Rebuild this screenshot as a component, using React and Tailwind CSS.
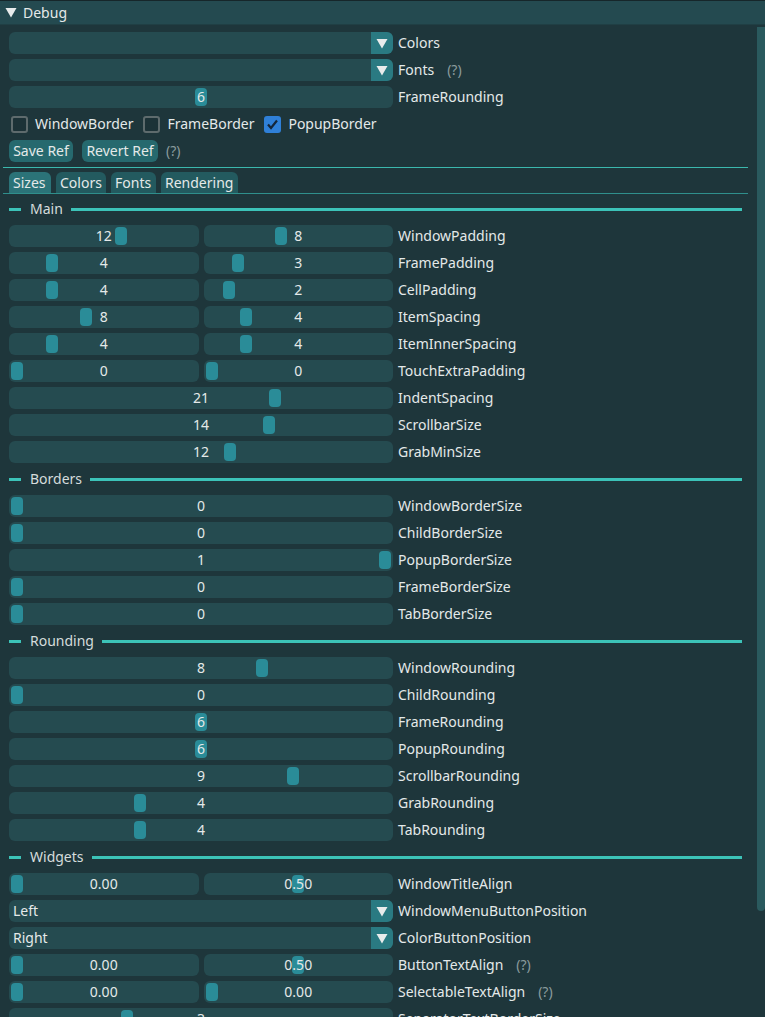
import React from "react";

const Grab = ({ t }) => (
  <div
    className="absolute top-[2px] h-[18px] w-[12px] rounded-[4px] bg-[#2a8c98]"
    style={{ left: `calc(2px + ${t} * (100% - 16px))` }}
  />
);

const Slider = ({ value, min = 0, max = 20, text }) => {
  const t = (value - min) / (max - min);
  return (
    <div className="relative h-[22px] flex-1 rounded-[6px] bg-[#254b50] flex items-center justify-center">
      <Grab t={t} />
      <span className="relative">{text ?? value}</span>
    </div>
  );
};

const Combo = ({ text = "" }) => (
  <div className="h-[22px] w-full rounded-[6px] bg-[#254b50] flex items-center">
    <span className="flex-1 pl-[4px]">{text}</span>
    <div className="w-[22px] h-[22px] rounded-r-[6px] bg-[#2a7a82] flex items-center justify-center">
      <svg width="12" height="11" viewBox="0 0 12 11">
        <polygon points="0.5,1 11.5,1 6,10.5" fill="#e8ecec" />
      </svg>
    </div>
  </div>
);

const Help = () => <span className="ml-[8px] text-[#8a9b9d]">(?)</span>;

const Row = ({ label, help, children }) => (
  <div className="flex shrink-0 items-center h-[22px] gap-[5px]">
    <div className="w-[384px] flex gap-[5px]">{children}</div>
    <span>{label}</span>
    {help && <Help />}
  </div>
);

const Section = ({ title }) => (
  <div className="flex shrink-0 items-center h-[22px]">
    <div className="w-[12px] h-[3px] bg-[#3cc3b8]" />
    <span className="ml-[9px] text-[#d5dcdc]">{title}</span>
    <div className="flex-1 ml-[8px] mr-[6px] h-[3px] bg-[#3cc3b8]" />
  </div>
);

const Checkbox = ({ label, checked }) => (
  <div className="flex items-center">
    <div
      className={`w-[17px] h-[17px] rounded-[3px] flex items-center justify-center ${
        checked ? "bg-[#2f80d8]" : "border-2 border-[#5e6b6d] bg-[#1c3237]"
      }`}
    >
      {checked && (
        <svg width="13" height="13" viewBox="0 0 13 13">
          <polyline points="2,6.5 5,10 11,2.5" fill="none" stroke="#14263a" strokeWidth="2.2" />
        </svg>
      )}
    </div>
    <span className="ml-[7px]">{label}</span>
  </div>
);

const Tab = ({ label, active, w }) => (
  <div
    className={`h-[21px] rounded-t-[6px] pl-[4px] leading-[21px] ${w} ${
      active ? "bg-[#2b7378]" : "bg-[#235a5f]"
    }`}
  >
    {label}
  </div>
);

const pairs = [
  ["WindowPadding", [12, 8]],
  ["FramePadding", [4, 3]],
  ["CellPadding", [4, 2]],
  ["ItemSpacing", [8, 4]],
  ["ItemInnerSpacing", [4, 4]],
];

const singles = [
  ["IndentSpacing", 21, 0, 30],
  ["ScrollbarSize", 14, 1, 20],
  ["GrabMinSize", 12, 1, 20],
];

const borders = [
  ["WindowBorderSize", 0],
  ["ChildBorderSize", 0],
  ["PopupBorderSize", 1],
  ["FrameBorderSize", 0],
  ["TabBorderSize", 0],
];

const rounding = [
  ["WindowRounding", 8],
  ["ChildRounding", 0],
  ["FrameRounding", 6],
  ["PopupRounding", 6],
  ["ScrollbarRounding", 9],
  ["GrabRounding", 4],
  ["TabRounding", 4],
];

export default function App() {
  return (
    <div className="w-[765px] h-[1017px] overflow-hidden bg-[#1e363b] text-[#e4e9e9] text-[14px] font-['Noto_Sans',sans-serif] flex flex-col">
      {/* Header */}
      <div className="h-[25px] shrink-0 border-t border-[#16262a] bg-[#244a50] flex items-center pl-[5px] border-b border-b-[#203f44]">
        <svg width="12" height="11" viewBox="0 0 12 11">
          <polygon points="0.5,1 11.5,1 6,10.5" fill="#e8ecec" />
        </svg>
        <span className="ml-[6px]">Debug</span>
      </div>

      <div className="flex flex-1 min-h-0">
        {/* Content */}
        <div className="flex-1 pl-[9px] pr-[9px] pt-[7px] flex flex-col gap-[5px] leading-[22px]">
          <Row label="Colors">
            <Combo />
          </Row>
          <Row label="Fonts" help>
            <Combo />
          </Row>
          <Row label="FrameRounding">
            <Slider value={6} max={12} />
          </Row>

          <div className="flex shrink-0 items-center h-[22px] pl-[2px]">
            <Checkbox label="WindowBorder" />
            <div className="ml-[10px]">
              <Checkbox label="FrameBorder" />
            </div>
            <div className="ml-[10px]">
              <Checkbox label="PopupBorder" checked />
            </div>
          </div>

          <div className="flex shrink-0 items-center h-[22px]">
            <div className="w-[64px] h-[22px] rounded-[6px] bg-[#26696e] text-center">Save Ref</div>
            <div className="ml-[9px] w-[76px] h-[22px] rounded-[6px] bg-[#26696e] text-center">Revert Ref</div>
            <Help />
          </div>

          <div className="h-px shrink-0 -ml-[6px] bg-[#3bb8ad]" />

          <div className="shrink-0 -mt-[1px] -mb-[1px]">
            <div className="flex gap-[5px]">
              <Tab label="Sizes" active w="w-[42px]" />
              <Tab label="Colors" w="w-[50px]" />
              <Tab label="Fonts" w="w-[45px]" />
              <Tab label="Rendering" w="w-[77px]" />
            </div>
            <div className="h-px -ml-[6px] bg-[#2f8f8c]" />
          </div>

          <Section title="Main" />
          {pairs.map(([label, [a, b]]) => (
            <Row key={label} label={label}>
              <Slider value={a} />
              <Slider value={b} />
            </Row>
          ))}
          <Row label="TouchExtraPadding">
            <Slider value={0} max={10} />
            <Slider value={0} max={10} />
          </Row>
          {singles.map(([label, v, min, max]) => (
            <Row key={label} label={label}>
              <Slider value={v} min={min} max={max} />
            </Row>
          ))}

          <Section title="Borders" />
          {borders.map(([label, v]) => (
            <Row key={label} label={label}>
              <Slider value={v} max={1} />
            </Row>
          ))}

          <Section title="Rounding" />
          {rounding.map(([label, v]) => (
            <Row key={label} label={label}>
              <Slider value={v} max={12} />
            </Row>
          ))}

          <Section title="Widgets" />
          <Row label="WindowTitleAlign">
            <Slider value={0} max={1} text="0.00" />
            <Slider value={0.5} max={1} text="0.50" />
          </Row>
          <Row label="WindowMenuButtonPosition">
            <Combo text="Left" />
          </Row>
          <Row label="ColorButtonPosition">
            <Combo text="Right" />
          </Row>
          <Row label="ButtonTextAlign" help>
            <Slider value={0} max={1} text="0.00" />
            <Slider value={0.5} max={1} text="0.50" />
          </Row>
          <Row label="SelectableTextAlign" help>
            <Slider value={0} max={1} text="0.00" />
            <Slider value={0} max={1} text="0.00" />
          </Row>
          <Row label="SeparatorTextBorderSize">
            <Slider value={3} max={10} />
          </Row>
        </div>

        {/* Scrollbar */}
        <div className="w-[8px] shrink-0 pt-[2px]">
          <div className="h-[884px] rounded-b-[4px] bg-[#2a5a5e]" />
        </div>
      </div>
    </div>
  );
}
